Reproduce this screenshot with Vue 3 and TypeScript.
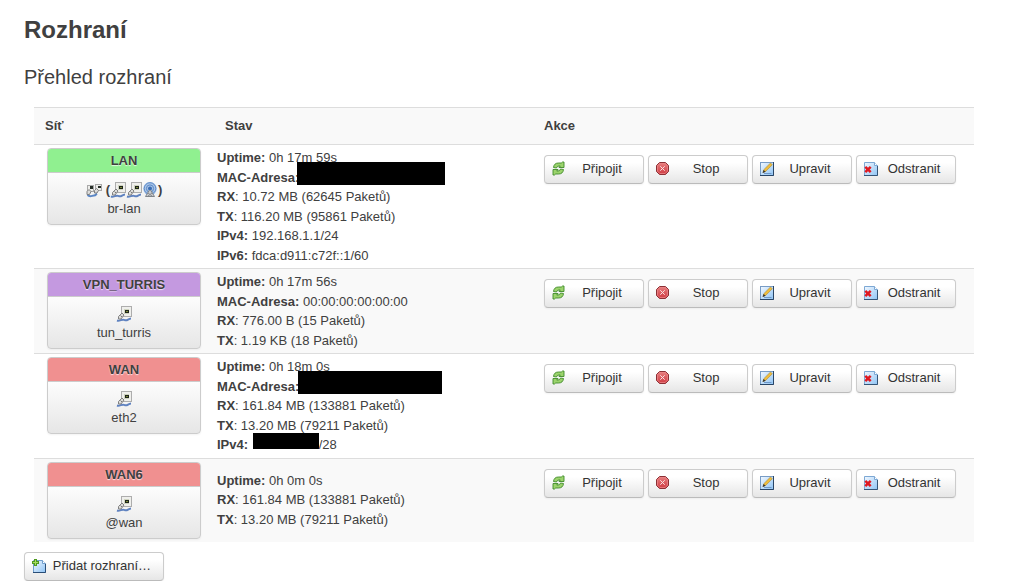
<script setup lang="ts">
interface Stat {
  label: string
  value: string
  colonOutside?: boolean
  hidden?: 'lan' | 'wan' | 'ip'
}

interface Iface {
  name: string
  device: string
  zone: string
  bridge?: boolean
  stats: Stat[]
}

const rx = (value: string): Stat => ({ label: 'RX', value, colonOutside: true })
const tx = (value: string): Stat => ({ label: 'TX', value, colonOutside: true })

const interfaces: Iface[] = [
  {
    name: 'LAN',
    device: 'br-lan',
    zone: 'green',
    bridge: true,
    stats: [
      { label: 'Uptime', value: '0h 17m 59s' },
      { label: 'MAC-Adresa', value: '', hidden: 'lan' },
      rx('10.72 MB (62645 Paketů)'),
      tx('116.20 MB (95861 Paketů)'),
      { label: 'IPv4', value: '192.168.1.1/24' },
      { label: 'IPv6', value: 'fdca:d911:c72f::1/60' },
    ],
  },
  {
    name: 'VPN_TURRIS',
    device: 'tun_turris',
    zone: 'purple',
    stats: [
      { label: 'Uptime', value: '0h 17m 56s' },
      { label: 'MAC-Adresa', value: '00:00:00:00:00:00' },
      rx('776.00 B (15 Paketů)'),
      tx('1.19 KB (18 Paketů)'),
    ],
  },
  {
    name: 'WAN',
    device: 'eth2',
    zone: 'red',
    stats: [
      { label: 'Uptime', value: '0h 18m 0s' },
      { label: 'MAC-Adresa', value: '', hidden: 'wan' },
      rx('161.84 MB (133881 Paketů)'),
      tx('13.20 MB (79211 Paketů)'),
      { label: 'IPv4', value: '/28', hidden: 'ip' },
    ],
  },
  {
    name: 'WAN6',
    device: '@wan',
    zone: 'red',
    stats: [
      { label: 'Uptime', value: '0h 0m 0s' },
      rx('161.84 MB (133881 Paketů)'),
      tx('13.20 MB (79211 Paketů)'),
    ],
  },
]

const actions = [
  { icon: 'reload', label: 'Připojit' },
  { icon: 'stop', label: 'Stop' },
  { icon: 'edit', label: 'Upravit' },
  { icon: 'remove', label: 'Odstranit' },
]
</script>

<template>
  <svg class="defs" aria-hidden="true">
    <defs>
      <linearGradient id="blue" x1="0" y1="0" x2="1" y2="1">
        <stop offset="0" stop-color="#f2f8ff" />
        <stop offset="1" stop-color="#8fc4f5" />
      </linearGradient>
      <linearGradient id="crimson" x1="0" y1="0" x2="0" y2="1">
        <stop offset="0" stop-color="#e88080" />
        <stop offset="1" stop-color="#cf3a42" />
      </linearGradient>
      <symbol id="ethernet" viewBox="0 0 16 16">
        <rect x="5.5" y=".5" width="10" height="10" fill="#efefec" stroke="#adadad" />
        <path d="M8 3h5v5H8z" fill="#cfd3bf" />
        <path d="M9 4h4v3H9z" fill="#1d241b" />
        <path d="M10 5h2v1h-2z" fill="#7b8a35" />
        <path d="M1 14.5C4 15.5 6 12.5 8.5 14S12 12.8 15 12.5" fill="none" stroke="#5f82c0" stroke-width="2" />
        <path d="M2.5 10.5 6 7l2 2-3 4H2.5z" fill="#dcdcda" stroke="#808080" />
        <path d="M4.5 9.5 6 11" stroke="#777" />
      </symbol>
      <symbol id="bridge" viewBox="0 0 16 16">
        <rect x="1.5" y="3.5" width="6" height="6" fill="#ecece9" stroke="#a8a8a8" />
        <rect x="9.5" y="2.5" width="6" height="6" fill="#ecece9" stroke="#a8a8a8" />
        <path d="M4 4h3v3H4zM12 4h3v2h-3z" fill="#262e28" />
        <path d="M1.5 13C4 15.5 6 13.5 8 13.5s2-1.5 3-2" fill="none" stroke="#5b86c4" stroke-width="2" />
        <path d="m1 9.5 2-2 2 2-1.5 3H1zM8.5 8.5l2-2 2 2L11 11H8.5z" fill="#dcdcda" stroke="#808080" />
      </symbol>
      <symbol id="wifi" viewBox="0 0 16 16">
        <circle cx="8" cy="6.8" r="6.8" fill="#a9c5e8" />
        <g fill="none" stroke="#5b88c6">
          <circle cx="8" cy="6.5" r="5.8" />
          <circle cx="8" cy="6.5" r="3.6" />
        </g>
        <circle cx="8" cy="6.5" r="2" fill="#3a6db4" />
        <path d="M7.5 8 3.5 14.5h9L8.5 8" fill="#c9ccd0" stroke="#7f8388" />
        <path d="m6 11 4 3m0-3-4 3" stroke="#8a8d90" />
      </symbol>
      <symbol id="reload" viewBox="0 0 16 16">
        <g fill="#9bd36c" stroke="#3f8a2a" stroke-width=".9" stroke-linejoin="round">
          <path d="M2.5 6.5Q3 2 7.5 2h2.8l1.2-1h1.5v5.5H8L9.3 5H8Q6 5 5.5 7z" />
          <path d="M12.5 8.5Q12 13 7.5 13H4.7l-1.2 1H2V8.5h5L5.7 10H7q2 0 2.5-2z" />
        </g>
      </symbol>
      <symbol id="stop" viewBox="0 0 16 16">
        <path d="M4.5 1.5h6l3 3v6l-3 3h-6l-3-3v-6z" fill="url(#crimson)" stroke="#8c3035" />
        <path d="M4.9 2.5h5.2l2.4 2.4v5.2l-2.4 2.4H4.9l-2.4-2.4V4.9z" fill="none" stroke="#e98487" stroke-width=".8" />
        <path d="m5.3 5.3 4.4 4.4m0-4.4L5.3 9.7" fill="none" stroke="#fbe4e4" />
      </symbol>
      <symbol id="edit" viewBox="0 0 16 16">
        <rect x="1.5" y="1.5" width="13" height="13" fill="url(#blue)" stroke="#789cc5" />
        <path d="M1 14.5h13.5V1" fill="none" stroke="#294566" />
        <path d="M5 12.5h7.5" fill="none" stroke="#6f98c9" />
        <path d="m4 11.5.8-2.8L11.5 2l1.8 1.8-6.7 6.7z" fill="#f0bd3a" stroke="#a98636" stroke-width=".6" />
        <path d="m3.6 12 1-3 2 1.8z" fill="#333" />
      </symbol>
      <symbol id="remove" viewBox="0 0 16 16">
        <path d="M1.5 1.5h10l3 3v10h-13z" fill="url(#blue)" stroke="#7da8d4" />
        <path d="M11.5 1.5v3h3" fill="#fff" stroke="#7da8d4" />
        <path d="M1 14.5h13.5V5" fill="none" stroke="#355577" />
        <path d="m2.3 5.8 5.4 5.4M7.7 5.8 2.3 11.2" fill="none" stroke="#e01820" stroke-width="2.5" />
      </symbol>
      <symbol id="add" viewBox="0 0 16 16">
        <path d="M2.5 2.5h9l3 3v9h-12z" fill="url(#blue)" stroke="#6f9dcc" />
        <path d="M11.5 2.5v3h3" fill="#fff" stroke="#6f9dcc" />
        <path d="M2 14.5h12.5V6" fill="none" stroke="#294d76" />
        <path d="M3 1h3v2h2v3H6v2H3V6H1V3h2z" fill="#4f9a20" />
        <path d="M4 2h1v2h2v1H5v2H4V5H2V4h2z" fill="#a6dc62" />
      </symbol>
    </defs>
  </svg>

  <main class="page">
    <h1>Rozhraní</h1>
    <h2>Přehled rozhraní</h2>
    <div class="table-wrap">
      <table>
        <colgroup>
          <col class="col-net" />
          <col class="col-status" />
          <col />
        </colgroup>
        <thead>
          <tr>
            <th scope="col">Síť</th>
            <th scope="col">Stav</th>
            <th scope="col">Akce</th>
          </tr>
        </thead>
        <tbody>
          <tr v-for="item in interfaces" :key="item.name">
            <td class="net">
              <div class="card">
                <div class="card-head" :class="item.zone">{{ item.name }}</div>
                <div class="card-body">
                  <div class="icons">
                    <template v-if="item.bridge">
                      <svg class="icon spaced"><use href="#bridge" /></svg>
                      <b>(</b>
                      <svg class="icon"><use href="#ethernet" /></svg>
                      <svg class="icon"><use href="#ethernet" /></svg>
                      <svg class="icon"><use href="#wifi" /></svg>
                      <b>)</b>
                    </template>
                    <svg v-else class="icon"><use href="#ethernet" /></svg>
                  </div>
                  <div class="device">{{ item.device }}</div>
                </div>
              </div>
            </td>
            <td class="status">
              <div v-for="stat in item.stats" :key="stat.label" class="stat">
                <b>{{ stat.label + (stat.colonOutside ? '' : ':') }}</b>{{ stat.colonOutside ? ': ' : ' ' }}<span v-if="stat.hidden" class="mask" :class="stat.hidden"></span>{{ stat.value }}
              </div>
            </td>
            <td class="actions">
              <div class="buttons">
                <button v-for="action in actions" :key="action.icon" type="button">
                  <svg class="icon"><use :href="'#' + action.icon" /></svg>
                  <span>{{ action.label }}</span>
                </button>
              </div>
            </td>
          </tr>
        </tbody>
      </table>
    </div>
    <button type="button" class="add">
      <svg class="icon"><use href="#add" /></svg>
      <span>Přidat rozhraní…</span>
    </button>
  </main>
</template>

<style>
body {
  margin: 0;
  background: #fff;
}
</style>

<style scoped>
.defs {
  position: absolute;
  width: 0;
  height: 0;
}
.page {
  padding: 12px 44px 0 24px;
  color: #404040;
  font: 13px/1.5 "Liberation Sans", Arial, sans-serif;
}
h1,
h2 {
  margin: 0;
  line-height: 36px;
}
h1 {
  font-size: 24px;
}
h2 {
  margin-top: 11px;
  font-size: 20px;
  font-weight: 400;
}
.table-wrap {
  margin: 12px 0 10px 10px;
}
table {
  width: 100%;
  table-layout: fixed;
  border-spacing: 0;
}
.col-net {
  width: 180px;
}
.col-status {
  width: 319px;
}
th {
  height: 36px;
  padding: 0 11px;
  border-top: 1px solid #ddd;
  background: #f9f9f9;
  text-align: left;
}
td {
  padding: 3px;
  border-top: 1px solid #ddd;
}
tbody tr:nth-child(even) td {
  background: #f9f9f9;
}
.net {
  vertical-align: top;
}
.card {
  box-sizing: border-box;
  width: 154px;
  height: 77px;
  margin: 0 auto;
  overflow: hidden;
  border: 1px solid #ccc;
  border-radius: 4px;
  background: linear-gradient(#fff, #fff 25%, #e6e6e6);
  box-shadow: 0 1px 2px rgba(0, 0, 0, 0.05);
  text-align: center;
}
.card-head {
  border-bottom: 1px solid #ccc;
  font-weight: 700;
  line-height: 23px;
  text-shadow: 0 1px 1px rgba(255, 255, 255, 0.75);
}
.green {
  background: #90f090;
}
.purple {
  background: #c499e0;
}
.red {
  background: #f09090;
}
.card-body {
  padding-top: 8px;
}
.icons {
  display: flex;
  align-items: center;
  justify-content: center;
  height: 18px;
}
.icon {
  flex: none;
  width: 16px;
  height: 16px;
}
.spaced {
  margin-right: 4px;
}
.device {
  line-height: 20px;
}
.stat {
  white-space: nowrap;
}
.mask {
  display: inline-block;
  height: 23px;
  margin-top: -9px;
  background: #000;
  vertical-align: middle;
}
.lan {
  width: 148px;
  margin-left: -6px;
}
.wan {
  width: 144px;
  margin-left: -5px;
}
.ip {
  width: 66px;
  height: 16px;
  margin-left: 1px;
}
.actions {
  padding: 10px 11px;
  vertical-align: top;
}
.buttons {
  display: flex;
  gap: 4px;
}
button {
  display: flex;
  box-sizing: border-box;
  align-items: center;
  width: 100px;
  height: 29px;
  padding: 0 6px 1px;
  border: 1px solid #ccc;
  border-bottom-color: #bbb;
  border-radius: 4px;
  background: linear-gradient(#fff, #fff 25%, #e6e6e6);
  box-shadow: 0 1px 2px rgba(0, 0, 0, 0.05);
  color: #333;
  font: 13px/18px "Liberation Sans", Arial, sans-serif;
}
button span {
  flex: 1;
  text-align: center;
  white-space: nowrap;
}
.add {
  width: 140px;
}
</style>
